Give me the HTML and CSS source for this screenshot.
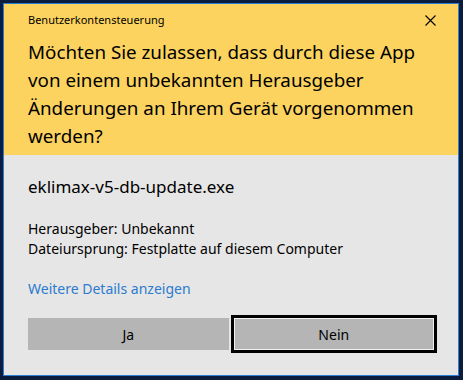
FILE: index.html
```html
<!DOCTYPE html>
<html lang="de">
<head>
    <meta charset="UTF-8">
    <title>Benutzerkontensteuerung</title>
    <link rel="stylesheet" href="styles.css">
</head>
<body>
    <div class="window">
        <div class="header">
            <div class="title-row">
                <span class="title">Benutzerkontensteuerung</span>
                <span class="close">
                    <svg width="11" height="11" viewBox="0 0 11 11">
                        <path d="M0.5 0.5 L10.5 10.5 M10.5 0.5 L0.5 10.5" stroke="#000" stroke-width="1.1" fill="none"/>
                    </svg>
                </span>
            </div>
            <h1>Möchten Sie zulassen, dass durch diese App von einem unbekannten Herausgeber Änderungen an Ihrem Gerät vorgenommen werden?</h1>
        </div>
        <div class="content">
            <div class="filename">eklimax-v5-db-update.exe</div>
            <div class="info">
                <p>Herausgeber: Unbekannt</p>
                <p>Dateiursprung: Festplatte auf diesem Computer</p>
            </div>
            <a class="details" href="#">Weitere Details anzeigen</a>
            <div class="button-group">
                <button type="button">Ja</button>
                <button type="button" class="focused">Nein</button>
            </div>
        </div>
    </div>
</body>
</html>
```

FILE: styles.css
```css
body {
    margin: 0;
    padding: 3px;
    background-color: #0b1c3c;
    font-family: "Noto Sans", "Open Sans", sans-serif;
    color: #000;
}
.window {
    width: 454px;
    height: 371px;
    border: 1px solid #2a7fd4;
    background-color: #e6e6e6;
    display: flex;
    flex-direction: column;
}
.header {
    background-color: #fcd35f;
    padding: 8px 24px 5px 24px;
}
.title-row {
    display: flex;
    justify-content: space-between;
    align-items: center;
    height: 16px;
}
.title {
    font-size: 11px;
    line-height: 16px;
}
.close {
    display: flex;
    margin-right: -2px;
}
h1 {
    margin: 10px 0 0 0;
    font-size: 18.8px;
    font-weight: normal;
    line-height: 28px;
}
.content {
    padding: 22px 24px 0 24px;
    display: flex;
    flex-direction: column;
    align-items: flex-start;
}
.filename {
    font-size: 17px;
    line-height: 20px;
}
.info {
    margin-top: 22px;
    font-size: 14px;
    line-height: 20px;
}
.info p {
    margin: 0;
}
.details {
    margin-top: 20px;
    font-size: 14px;
    line-height: 20px;
    color: #2b7bd0;
    text-decoration: none;
}
.button-group {
    margin-top: 19px;
    display: flex;
    gap: 5px;
    width: 100%;
}
button {
    flex: 1;
    height: 32px;
    border: none;
    background-color: #b5b5b5;
    font-family: inherit;
    font-size: 14px;
    color: #000;
    padding: 0;
}
button.focused {
    outline: 3px solid #000;
    box-shadow: inset 0 0 0 1px #f0f0f0;
}
```
